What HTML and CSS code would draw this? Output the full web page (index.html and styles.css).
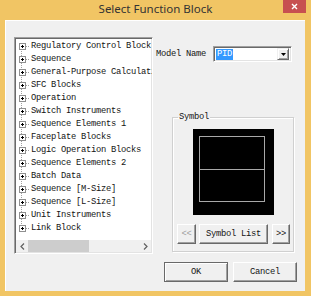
FILE: index.html
```html
<!DOCTYPE html>
<html>
<head>
<meta charset="utf-8">
<link rel="stylesheet" href="styles.css">
</head>
<body>
<div class="window">
  <div class="titlebar">
    <span class="title">Select Function Block</span>
    <span class="close"><svg width="7" height="7" viewBox="0 0 7 7"><path d="M1 1L6 6M6 1L1 6" stroke="#fff" stroke-width="1.4"/></svg></span>
  </div>
  <div class="client">
    <div class="tree">
      <ul class="items">
        <li class="row"><span class="exp"></span><span class="conn"></span><span class="label">Regulatory Control Block</span></li>
        <li class="row"><span class="exp"></span><span class="conn"></span><span class="label">Sequence</span></li>
        <li class="row"><span class="exp"></span><span class="conn"></span><span class="label">General-Purpose Calculation</span></li>
        <li class="row"><span class="exp"></span><span class="conn"></span><span class="label">SFC Blocks</span></li>
        <li class="row"><span class="exp"></span><span class="conn"></span><span class="label">Operation</span></li>
        <li class="row"><span class="exp"></span><span class="conn"></span><span class="label">Switch Instruments</span></li>
        <li class="row"><span class="exp"></span><span class="conn"></span><span class="label">Sequence Elements 1</span></li>
        <li class="row"><span class="exp"></span><span class="conn"></span><span class="label">Faceplate Blocks</span></li>
        <li class="row"><span class="exp"></span><span class="conn"></span><span class="label">Logic Operation Blocks</span></li>
        <li class="row"><span class="exp"></span><span class="conn"></span><span class="label">Sequence Elements 2</span></li>
        <li class="row"><span class="exp"></span><span class="conn"></span><span class="label">Batch Data</span></li>
        <li class="row"><span class="exp"></span><span class="conn"></span><span class="label">Sequence [M-Size]</span></li>
        <li class="row"><span class="exp"></span><span class="conn"></span><span class="label">Sequence [L-Size]</span></li>
        <li class="row"><span class="exp"></span><span class="conn"></span><span class="label">Unit Instruments</span></li>
        <li class="row"><span class="exp"></span><span class="conn"></span><span class="label">Link Block</span></li>
      </ul>
      <div class="hscroll">
        <span class="sb-btn"><svg width="5" height="7" viewBox="0 0 5 7"><path d="M4 0.5L1 3.5L4 6.5" fill="none" stroke="#606060" stroke-width="1.2"/></svg></span>
        <span class="sb-track"><span class="sb-thumb"></span></span>
        <span class="sb-btn"><svg width="5" height="7" viewBox="0 0 5 7"><path d="M1 0.5L4 3.5L1 6.5" fill="none" stroke="#606060" stroke-width="1.2"/></svg></span>
      </div>
    </div>
    <div class="side">
      <div class="model-row">
        <span class="model-label">Model Name</span>
        <div class="combo">
          <span class="combo-text"><span class="sel">PID</span></span>
          <span class="combo-btn"><svg width="5" height="3" viewBox="0 0 5 3"><path d="M0 0H5L2.5 3Z" fill="#000"/></svg></span>
        </div>
      </div>
      <fieldset class="group">
        <legend class="group-label">Symbol</legend>
        <div class="symbol">
          <svg width="81" height="86" viewBox="0 0 81 86"><rect x="6.5" y="7.5" width="65" height="65" fill="none" stroke="#a8a8a8"/><path d="M6.5 40.5H71.5" stroke="#a8a8a8"/></svg>
        </div>
        <div class="sym-buttons">
          <span class="btn btn-prev disabled">&lt;&lt;</span>
          <span class="btn btn-list">Symbol List</span>
          <span class="btn btn-next">&gt;&gt;</span>
        </div>
      </fieldset>
      <div class="dlg-buttons">
        <span class="btn btn-dlg default">OK</span>
        <span class="btn btn-dlg">Cancel</span>
      </div>
    </div>
  </div>
</div>
</body>
</html>
```
FILE: styles.css
```css
* { box-sizing: border-box; }
html, body { margin: 0; padding: 0; }
body { background: #f1c564; }

.window {
  width: 311px;
  height: 296px;
  background: #f1c564;
  font-family: "Liberation Mono", "Courier New", monospace;
  font-size: 8.8px;
  letter-spacing: -0.28px;
  color: #141414;
}

.titlebar {
  position: relative;
  height: 20px;
  text-align: center;
  font-family: "Noto Sans", "Open Sans", sans-serif;
  font-size: 11.5px;
  letter-spacing: 0;
  line-height: 18px;
  color: #333333;
}
.close {
  position: absolute;
  top: 0;
  right: 5px;
  width: 23px;
  height: 13px;
  background: #c75050;
  display: flex;
  align-items: center;
  justify-content: center;
}
.close svg { display: block; }

.client {
  margin-left: 5px;
  width: 300px;
  height: 271px;
  background: #f0f0f0;
  border-top: 1px solid #ffffff;
  border-left: 1px solid #ffffff;
  display: flex;
  align-items: flex-start;
  padding: 16px 0 0 8px;
}

/* tree view */
.tree {
  width: 139px;
  height: 217px;
  background: #fff;
  border: 1px solid;
  border-color: #a0a0a0 #ffffff #ffffff #a0a0a0;
  box-shadow: inset 1px 1px 0 #696969, inset -1px -1px 0 #e3e3e3;
  padding: 1px;
  display: flex;
  flex-direction: column;
  overflow: hidden;
}
.items {
  list-style: none;
  margin: 0;
  padding: 1px 0 0 0;
  flex: 1;
  background: repeating-linear-gradient(to bottom, #a0a0a0 0 1px, transparent 1px 2px) 5px 8px / 1px 182px no-repeat;
}
.row {
  height: 13px;
  display: flex;
  align-items: center;
  white-space: nowrap;
}
.exp {
  flex: none;
  width: 7px;
  height: 7px;
  margin-left: 3px;
  border: 1px solid #8f8f8f;
  background:
    linear-gradient(#000, #000) center / 3px 1px no-repeat,
    linear-gradient(#000, #000) center / 1px 3px no-repeat,
    #fff;
}
.conn {
  flex: none;
  width: 4px;
  height: 1px;
  margin-right: 1px;
  background: repeating-linear-gradient(to right, #a0a0a0 0 1px, transparent 1px 2px);
}
.label { line-height: 13px; }

.hscroll {
  flex: none;
  height: 12px;
  display: flex;
  background: #f0f0f0;
}
.sb-btn {
  flex: none;
  width: 12px;
  display: flex;
  align-items: center;
  justify-content: center;
}
.sb-btn svg { display: block; }
.sb-track { flex: 1; display: flex; align-items: stretch; }
.sb-thumb { width: 61px; background: #cdcdcd; }

/* right side */
.side {
  margin-left: 3px;
  width: 149px;
  display: flex;
  flex-direction: column;
  align-items: flex-start;
}
.model-row {
  margin-top: 9px;
  display: flex;
  align-items: center;
}
.model-label { width: 57px; }
.combo {
  width: 79px;
  height: 16px;
  background: #fff;
  border: 1px solid;
  border-color: #a0a0a0 #ffffff #ffffff #a0a0a0;
  box-shadow: inset 1px 1px 0 #696969, inset -1px -1px 0 #e3e3e3;
  display: flex;
  align-items: center;
  padding: 2px;
}
.combo-text { flex: 1; display: flex; }
.sel {
  background: #3399ff;
  color: #fff;
  padding: 0 1px;
  line-height: 11px;
}
.combo-btn {
  width: 12px;
  height: 12px;
  background: #f0f0f0;
  border: 1px solid;
  border-color: #f0f0f0 #696969 #696969 #f0f0f0;
  box-shadow: inset 1px 1px 0 #fff, inset -1px -1px 0 #a0a0a0;
  display: flex;
  align-items: center;
  justify-content: center;
}
.combo-btn svg { display: block; }

.group {
  margin: 50px 0 0 16px;
  padding: 0 0 7px 0;
  width: 122px;
  border: 1px solid #d0d0d0;
  box-shadow: inset 1px 1px 0 #fff, 1px 1px 0 #fff;
  min-inline-size: 0;
}
.group-label {
  margin-left: 5px;
  padding: 0 1px;
  line-height: 10px;
}
.symbol {
  margin: 7px 0 0 20px;
  width: 81px;
  height: 86px;
  background: #000;
}
.symbol svg { display: block; }
.sym-buttons {
  margin: 9px 0 0 4px;
  display: flex;
}

.btn {
  display: flex;
  align-items: center;
  justify-content: center;
  height: 20px;
  background: #f0f0f0;
  border: 1px solid;
  border-color: #ffffff #696969 #696969 #ffffff;
  box-shadow: inset -1px -1px 0 #a0a0a0;
  color: #141414;
}
.btn.disabled { color: #a0a0a0; }
.btn-prev { width: 19px; }
.btn-list { width: 69px; margin-left: 3px; }
.btn-next { width: 18px; margin-left: 4px; }

.dlg-buttons {
  margin: 10px 0 0 8px;
  display: flex;
  gap: 5px;
}
.btn-dlg { width: 64px; }
.btn-dlg.default { border-color: #696969; box-shadow: inset 1px 1px 0 #fff, inset -1px -1px 0 #a0a0a0; }
```
